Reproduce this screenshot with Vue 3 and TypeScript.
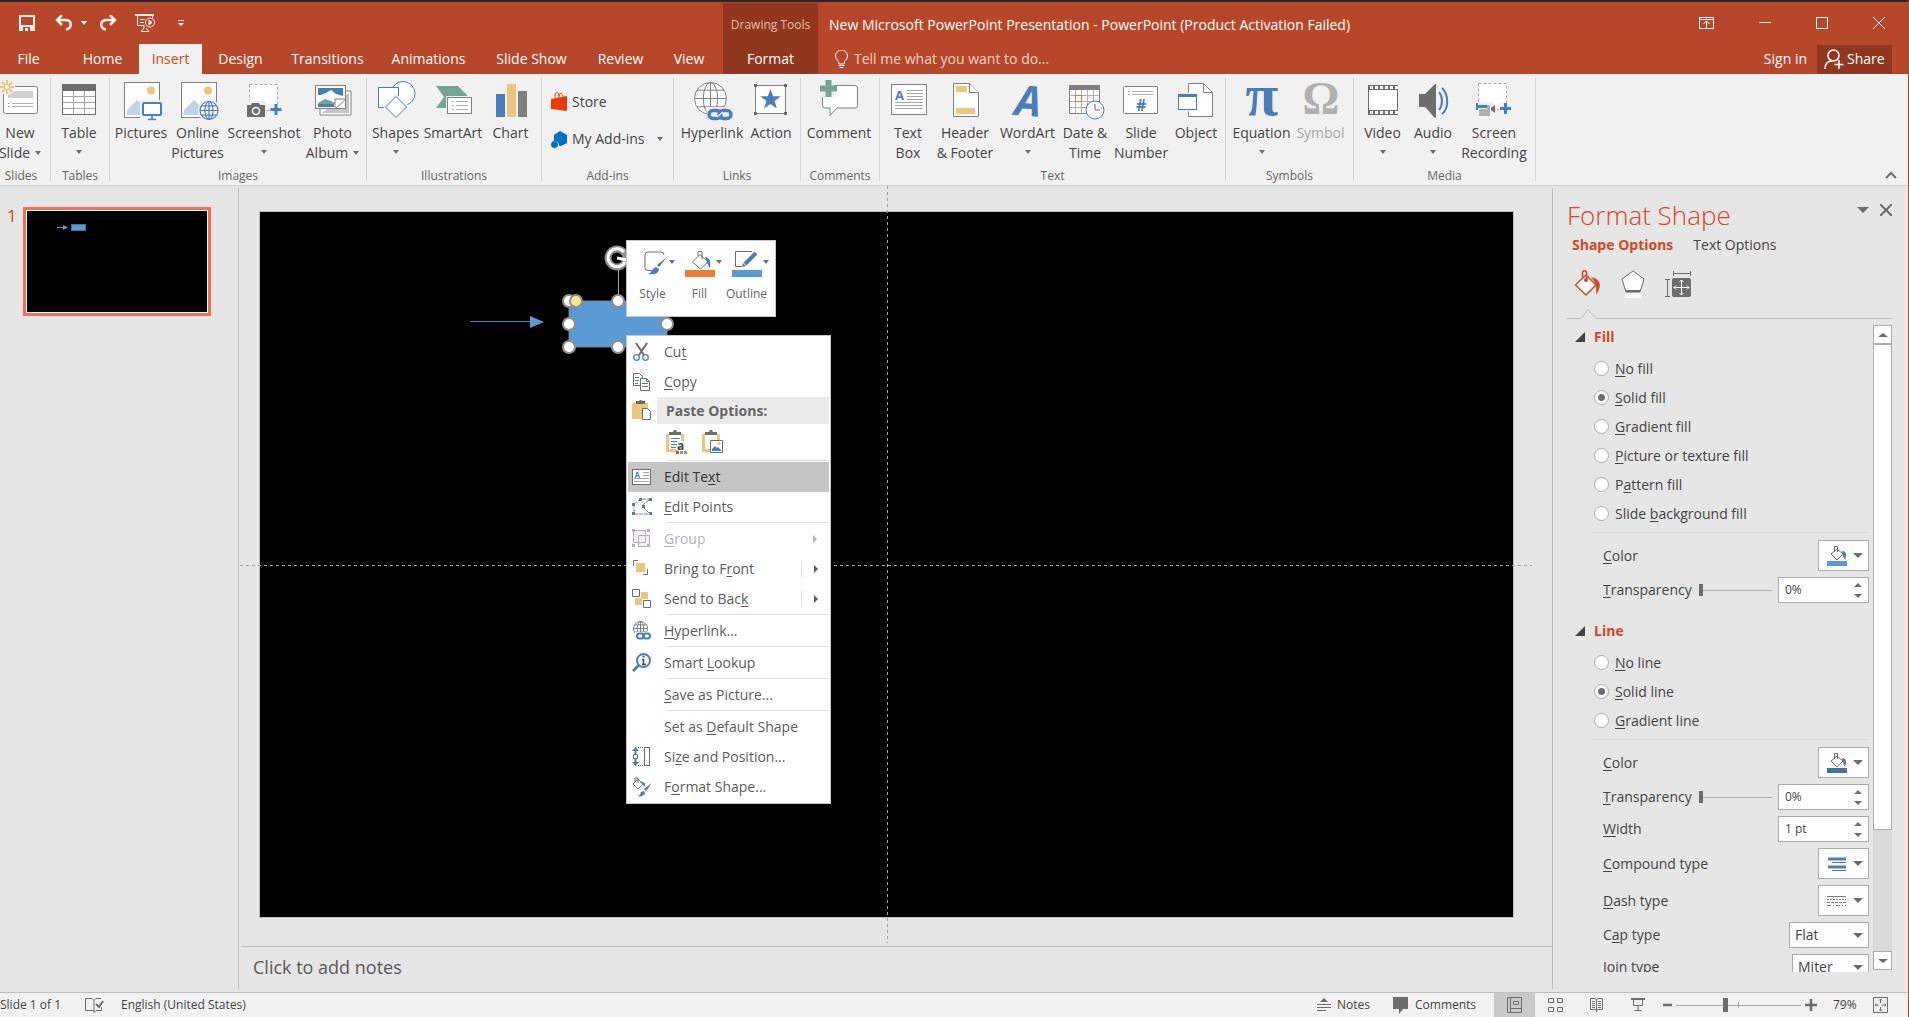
<script setup lang="ts">
import { ref } from 'vue'

interface Tool {
  icon: string
  lines: string[]
  width: number
  caret?: 'below' | 'inline'
  disabled?: boolean
}
interface Group {
  name: string
  width: number
  tools: Tool[]
}
interface MenuItem {
  label: string
  icon?: string
  sub?: boolean
  split?: boolean
  disabled?: boolean
  active?: boolean
  line?: boolean
}

const tabs = [
  { name: 'Home', width: 73 },
  { name: 'Insert', width: 63 },
  { name: 'Design', width: 77 },
  { name: 'Transitions', width: 97 },
  { name: 'Animations', width: 105 },
  { name: 'Slide Show', width: 101 },
  { name: 'Review', width: 77 },
  { name: 'View', width: 60 },
]
const activeTab = ref('Insert')

const groupsBefore: Group[] = [
  { name: 'Slides', width: 51, tools: [{ icon: 'newSlide', lines: ['New', 'Slide'], width: 44, caret: 'inline' }] },
  { name: 'Tables', width: 59, tools: [{ icon: 'table', lines: ['Table'], width: 54, caret: 'below' }] },
  {
    name: 'Images',
    width: 257,
    tools: [
      { icon: 'pictures', lines: ['Pictures'], width: 58 },
      { icon: 'online', lines: ['Online', 'Pictures'], width: 55 },
      { icon: 'screenshot', lines: ['Screenshot'], width: 78, caret: 'below' },
      { icon: 'album', lines: ['Photo', 'Album'], width: 59, caret: 'inline' },
    ],
  },
  {
    name: 'Illustrations',
    width: 175,
    tools: [
      { icon: 'shapes', lines: ['Shapes'], width: 53, caret: 'below' },
      { icon: 'smartArt', lines: ['SmartArt'], width: 62 },
      { icon: 'chart', lines: ['Chart'], width: 53 },
    ],
  },
]
const groupsAfter: Group[] = [
  {
    name: 'Links',
    width: 127,
    tools: [
      { icon: 'hyperlink', lines: ['Hyperlink'], width: 70 },
      { icon: 'action', lines: ['Action'], width: 48 },
    ],
  },
  { name: 'Comments', width: 79, tools: [{ icon: 'comment', lines: ['Comment'], width: 72 }] },
  {
    name: 'Text',
    width: 346,
    tools: [
      { icon: 'textBox', lines: ['Text', 'Box'], width: 52 },
      { icon: 'header', lines: ['Header', '& Footer'], width: 62 },
      { icon: 'wordArt', lines: ['WordArt'], width: 63, caret: 'below' },
      { icon: 'date', lines: ['Date &', 'Time'], width: 52 },
      { icon: 'slideNumber', lines: ['Slide', 'Number'], width: 60 },
      { icon: 'object', lines: ['Object'], width: 50 },
    ],
  },
  {
    name: 'Symbols',
    width: 128,
    tools: [
      { icon: 'equation', lines: ['Equation'], width: 64, caret: 'below' },
      { icon: 'symbol', lines: ['Symbol'], width: 54, disabled: true },
    ],
  },
  {
    name: 'Media',
    width: 182,
    tools: [
      { icon: 'video', lines: ['Video'], width: 51, caret: 'below' },
      { icon: 'audio', lines: ['Audio'], width: 50, caret: 'below' },
      { icon: 'recording', lines: ['Screen', 'Recording'], width: 72 },
    ],
  },
]

const globe = (cx: number, cy: number, r: number, color: string, w: number): string =>
  `<g fill="none" stroke="${color}" stroke-width="${w}"><circle cx="${cx}" cy="${cy}" r="${r}" fill="#fff"/>` +
  `<ellipse cx="${cx}" cy="${cy}" rx="${r * 0.45}" ry="${r}"/><path d="M${cx - r} ${cy}h${2 * r}M${cx} ${cy - r}v${2 * r}` +
  `M${cx - r * 0.85} ${cy - r * 0.52}h${r * 1.7}M${cx - r * 0.85} ${cy + r * 0.52}h${r * 1.7}"/></g>`

const ribbonIcons: Record<string, string> = {
  newSlide:
    '<rect x="5.5" y="6.5" width="34" height="27" rx="2" fill="#fff" stroke="#808080"/><path d="M10 11h25v7H10z" fill="#d0d0d0"/>' +
    '<path d="M10 23.500h2M14 23.500h21M10 26.500h2M14 26.500h21" stroke="#b0b0b0"/><circle cx="9" cy="7" r="8" fill="#f1f1f1"/>' +
    '<path d="M9 0v5M9 9v5M2 7h5M11 7h5M4 2l4 4M10 8l4 4M14 2l-4 4M8 8l-4 4" stroke="#edc57c" stroke-width="2"/><circle cx="9" cy="7" r="2.500" fill="#fff" stroke="#edc57c"/>',
  table:
    '<rect x="5.5" y="4.500" width="33" height="30" fill="#fff" stroke="#6d6d6d"/><path d="M5 4h34v7H5z" fill="#6d6d6d"/>' +
    '<path d="M16.500 11v23M27.500 11v23M6 16.500h32M6 22.500h32M6 28.500h32" stroke="#a6a6a6"/>',
  pictures:
    '<rect x="5.5" y="2.500" width="35" height="35" fill="#fff" stroke="#808080"/><circle cx="32" cy="10.500" r="4" fill="#edc57c"/>' +
    '<path d="M8 35V30l10-10 4 3v12z" fill="#c0d3ea"/><path d="M21 20h23v20H21z" fill="#f1f1f1"/><rect x="24" y="23" width="18" height="12" rx="1" fill="#fff" stroke="#4a7ebb" stroke-width="2"/><path d="M33 36v3M29 39.500h8" stroke="#4a7ebb" stroke-width="1.500"/>',
  online:
    '<rect x="5.5" y="2.500" width="35" height="35" fill="#fff" stroke="#808080"/><circle cx="32" cy="10.500" r="4" fill="#edc57c"/>' +
    '<path d="M8 35V30l10-10 8 8v7z" fill="#c0d3ea"/><circle cx="33" cy="30.500" r="11" fill="#f1f1f1"/>' + globe(33, 30.5, 9, '#4a7ebb', 1.2),
  screenshot:
    '<rect x="7.500" y="4.500" width="28" height="26" fill="#fff" stroke="#a6a6a6" stroke-dasharray="3 2"/><path d="M4 21h20v10H4zM26 24h14v9H26z" fill="#f1f1f1"/>' +
    '<path d="M5 25h4l1-2h7l1 2h5v12H5z" fill="#6d6d6d"/><circle cx="14" cy="31" r="3.500" fill="none" stroke="#fff" stroke-width="1.500"/><path d="M25 30.500h3" stroke="#a6a6a6"/><path d="M34 24v11M28.500 29.500h11" stroke="#4a7ebb" stroke-width="3"/>',
  album:
    '<path d="M9 11h31v24H9z" fill="#fff" stroke="#808080"/><path d="M11 33h27V13z" fill="#c4c4c4"/><rect x="4.500" y="5.500" width="30" height="23" fill="#fff" stroke="#808080"/>' +
    '<path d="M7 8h25v8l-7-2-5-4-5 3-5 2H7z" fill="#4a7ebb"/><path d="M7 23l7-4 6 2 4 2v1H7z" fill="#74a590"/><path d="M7 24h16v3H7z" fill="#4a7ebb"/><path d="M24 29V19h11z" fill="#fff" stroke="#808080"/>',
  shapes:
    '<circle cx="29" cy="13.500" r="12" fill="#fff" stroke="#4a7ebb"/><rect x="4.500" y="7.500" width="20" height="20" fill="#fff" stroke="#4a7ebb"/><path d="M22 15.500l11 11-11 11-11-11z" fill="#fff" stroke="#f1f1f1" stroke-width="3"/><path d="M22 16.500l10.500 10.500L22 37.500 11.500 27z" fill="#fff" stroke="#4a7ebb"/>',
  smartArt:
    '<path d="M5 6h22l9 9v13H5l8-11z" fill="#74a590"/><rect x="15" y="16" width="28" height="20" fill="#f1f1f1"/><rect x="16.500" y="17.500" width="24" height="16" fill="#fff" stroke="#808080"/><path d="M21 21.500h2M25 21.500h12M21 25.500h2M25 25.500h12M21 29.500h2M25 29.500h12" stroke="#b0b0b0"/>',
  chart: '<path d="M7 14h9v23H7z" fill="#4a7ebb"/><path d="M18 4h9v33h-9z" fill="#edc57c"/><path d="M29 11h9v26h-9z" fill="#808080"/>',
  hyperlink:
    globe(20.5, 18.5, 16, '#808080', 1) +
    '<path d="M16 27h28v14H18z" fill="#f1f1f1"/><g fill="none" stroke="#4a7ebb" stroke-width="3.500"><rect x="19" y="30.500" width="12" height="8" rx="4"/><rect x="29" y="30.500" width="12" height="8" rx="4"/></g><path d="M27 37l6-5" stroke="#f1f1f1" stroke-width="1.500"/>',
  action:
    '<rect x="6.500" y="5.500" width="30" height="28" fill="#fff" stroke="#808080"/><path d="M5 4h3v3H5zM35 4h3v3h-3zM5 32h3v3H5zM35 32h3v3h-3z" fill="#6d6d6d"/><path d="M21.500 9l2.600 7.300h7.700l-6.200 4.700 2.300 7.500-6.400-4.600-6.400 4.600 2.300-7.500-6.200-4.700h7.700z" fill="#4a7ebb"/>',
  comment:
    '<path d="M8 5.500h30a2.500 2.500 0 0 1 2.500 2.500v17.500a2.500 2.500 0 0 1-2.500 2.500H20l-7 7.500V28H8a2.500 2.500 0 0 1-2.500-2.500V8A2.500 2.500 0 0 1 8 5.500z" fill="#fff" stroke="#808080"/><path d="M5 4h12v13H5z" fill="#f1f1f1"/><path d="M11.500 0v17M3 8.500h17" stroke="#74a590" stroke-width="6"/>',
  textBox:
    '<rect x="5.5" y="4.500" width="35" height="30" fill="#fff" stroke="#808080"/><text x="9" y="20" font-size="13" font-weight="700" fill="#4a7ebb">A</text><path d="M21 10.500h16M21 13.500h16M21 16.500h16M21 19.500h16M9 22.500h28M9 25.500h28M9 28.500h28" stroke="#a6a6a6"/>',
  header:
    '<path d="M10.500 3.500h16l9 9v24h-25z" fill="#fff" stroke="#808080"/><path d="M26.500 3.500v9h9" fill="#fff" stroke="#808080"/><path d="M13 6h11v6H13zM13 28h19v6H13z" fill="#edc57c"/>',
  wordArt: '<text x="9" y="36" font-size="42" font-weight="700" font-style="italic" fill="#4a7ebb" transform="rotate(4 22 22)">A</text>',
  date:
    '<rect x="6.500" y="5.500" width="30" height="28" fill="#fff" stroke="#808080"/><path d="M6 5h31v5H6z" fill="#808080"/><path d="M12.500 10v23M18.500 10v23M24.500 10v23M30.500 10v23M7 15.500h29M7 21.500h29M7 27.500h29" stroke="#b0b0b0"/><rect x="12.500" y="15.500" width="6" height="6" fill="#fff" stroke="#e0793a"/><circle cx="32" cy="30" r="9" fill="#fff" stroke="#4a7ebb"/><path d="M32 24v6h5" fill="none" stroke="#6d6d6d"/>',
  slideNumber:
    '<rect x="4.500" y="6.500" width="34" height="27" rx="1" fill="#fff" stroke="#808080"/><path d="M9 11.500h2M13 11.500h21M9 14.500h2M13 14.500h21" stroke="#b0b0b0"/><text x="17" y="31" font-size="16" font-weight="700" fill="#4a7ebb">#</text>',
  object:
    '<path d="M14.500 3.500h15l9 9v24h-24z" fill="#fff" stroke="#808080"/><path d="M29.500 3.500v9h9" fill="none" stroke="#808080"/><rect x="2.500" y="12.500" width="22" height="19" fill="#f1f1f1" stroke="none"/><rect x="4.500" y="14.500" width="18" height="15" fill="#fff" stroke="#4a7ebb"/><path d="M4 14h19v3H4z" fill="#4a7ebb"/>',
  equation: '<text x="22" y="35" text-anchor="middle" font-family="Liberation Serif, serif" font-size="60" font-weight="700" fill="#4a7ebb">π</text>',
  symbol: '<text x="22" y="34" text-anchor="middle" font-family="Liberation Serif, serif" font-size="46" font-weight="700" fill="#b0b0b0">Ω</text>',
  video:
    '<rect x="7.500" y="5.500" width="29" height="29" fill="#fff" stroke="#6d6d6d"/><path d="M7 5h30v5H7zM7 30h30v5H7z" fill="#6d6d6d"/><path d="M9 7.500h28M9 32.500h28" stroke="#fff" stroke-width="3" stroke-dasharray="3 2"/>',
  audio:
    '<path d="M8 14h6L24 4h1v34h-1L14 27H8z" fill="#6d6d6d"/><path d="M28 12c4 5 4 13 0 18M31 8c7 7 7 20 0 26" fill="none" stroke="#4a7ebb" stroke-width="2"/>',
  recording:
    '<rect x="6.500" y="3.500" width="28" height="26" fill="#fff" stroke="#a6a6a6" stroke-dasharray="3 2"/><path d="M3 22h20v14H3zM27 23h12v9H27z" fill="#f1f1f1"/><path d="M4 25h14v3H4zM4 23h2v7H4z" fill="#4a7ebb"/><path d="M7 29h11v7H7zM15 25h3v6h-3z" fill="#b0b0b0"/><path d="M19 28l4-3v8l-4-3z" fill="#6d6d6d"/><path d="M33.500 23v11M28 28.500h11" stroke="#4a7ebb" stroke-width="3"/>',
}

const menuIcons: Record<string, string> = {
  cut: '<path d="M4 1l8 12M15 1L7 13" stroke="#6d6d6d" stroke-width="2"/><g fill="#fff" stroke="#4a7ebb" stroke-width="1.300"><circle cx="4.500" cy="15.500" r="2.800"/><circle cx="13.500" cy="15.500" r="2.800"/></g>',
  copy: '<path d="M1.500 1.500h6l3 3v9h-9z" fill="#fff" stroke="#6d6d6d"/><path d="M3 5.500h4M3 8.500h4M3 11.500h3" stroke="#4a7ebb"/><path d="M8.500 6.500h6l3 3v9h-9z" fill="#fff" stroke="#6d6d6d"/><path d="M14.500 6.500v3h3" fill="none" stroke="#6d6d6d"/><path d="M10 11.500h6M10 14.500h6" stroke="#4a7ebb"/>',
  editText: '<rect x=".5" y="2.500" width="18" height="15" fill="#fff" stroke="#6d6d6d"/><text x="2.500" y="11" font-size="8" font-weight="700" fill="#4a7ebb">A</text><path d="M11 5.500h6M11 8.500h6M2 11.500h15M2 14.500h15" stroke="#a6a6a6"/>',
  points: '<path d="M2 7l6-5h9M2 7v10h16M17 3l-7 6 7 7" fill="none" stroke="#808080" stroke-dasharray="4 1"/><path d="M7 1h3v3H7zM17 1h3v3h-3zM0 6h3v3H0zM10 8h3v3h-3zM0 15h3v3H0zM17 15h3v3h-3z" fill="#4a7ebb"/>',
  group: '<rect x="1.500" y="1.500" width="12" height="12" fill="#f5f0f7" stroke="#b5b0b8"/><rect x="6.500" y="6.500" width="11" height="11" fill="#f5f0f7" stroke="#b5b0b8"/><path d="M6.500 13.500h7v-7" fill="none" stroke="#b5b0b8"/><path d="M0 0h3v3H0zM15 0h3v3h-3zM0 15h3v3H0zM15 15h3v3h-3z" fill="#b5b0b8"/>',
  front: '<path d="M6 1.500H1.500V7M11 15.500h4.500V10" fill="none" stroke="#6d6d6d"/><path d="M4 4h9v9H4z" fill="#edc57c"/>',
  back: '<path d="M9 3h7v7H9zM3 9h7v7H3z" fill="#edc57c"/><path d="M.5.5h7v7h-7zM11.500 11.500h7v7h-7z" fill="#fff" stroke="#6d6d6d"/>',
  link: globe(8.5, 7.5, 7, '#808080', 1) + '<path d="M3 11h16v8H3z" fill="#fff"/><g fill="none" stroke="#4a7ebb" stroke-width="2"><rect x="5" y="12.500" width="7" height="5" rx="2.500"/><rect x="11" y="12.500" width="7" height="5" rx="2.500"/></g>',
  lookup: '<path d="M1 18l6-6" stroke="#4a7ebb" stroke-width="3"/><circle cx="11.500" cy="7.500" r="6.500" fill="#fff" stroke="#4a7ebb" stroke-width="2"/><path d="M10.500 3.500h2M10 6.500h1.500v5M10 11.500h4" stroke="#444" stroke-width="1.500" fill="none"/>',
  size: '<path d="M3.500 2v5M3.500 12v5" stroke="#4a7ebb" stroke-width="2"/><path d="M0 4l3.500-4L7 4zM0 15l3.500 4L7 15z" fill="#4a7ebb"/><path d="M1.500 7.500h4v4h-4z" fill="#fff" stroke="#6d6d6d"/><path d="M6 .5h6M6 18.500h6" stroke="#6d6d6d" stroke-dasharray="1 1"/><rect x="12.500" y=".5" width="5" height="18" fill="#fff" stroke="#6d6d6d"/>',
  format: '<path d="M1 7l5-5 5 5-5 5z" fill="#fff" stroke="#6d6d6d"/><path d="M3 5V1h3v5" fill="none" stroke="#6d6d6d"/><path d="M8 5c4-1 6 2 5 5l-2-2z" fill="#4a7ebb"/><path d="M20 6l-6 8-2-2z" fill="#6d6d6d"/><path d="M5 19c2 0 3-1 4-4l3-1 1 2c-1 3-4 4-8 3z" fill="#4a7ebb"/>',
}

const menuTop: MenuItem[] = [
  { label: 'Cu&t', icon: 'cut' },
  { label: '&Copy', icon: 'copy' },
]
const menuRest: MenuItem[] = [
  { label: 'Edit Te&xt', icon: 'editText', active: true },
  { label: '&Edit Points', icon: 'points' },
  { label: '&Group', icon: 'group', sub: true, disabled: true, line: true },
  { label: 'Bring to F&ront', icon: 'front', sub: true, split: true },
  { label: 'Send to Bac&k', icon: 'back', sub: true, split: true },
  { label: '&Hyperlink...', icon: 'link', line: true },
  { label: 'Smart &Lookup', icon: 'lookup', line: true },
  { label: '&Save as Picture...', line: true },
  { label: 'Set as &Default Shape', line: true },
  { label: 'Si&ze and Position...', icon: 'size' },
  { label: 'F&ormat Shape...', icon: 'format' },
]

const fillOptions = ['&No fill', '&Solid fill', '&Gradient fill', '&Picture or texture fill', 'P&attern fill', 'Slide &background fill']
const lineOptions = ['&No line', '&Solid line', '&Gradient line']
const fill = ref('&Solid fill')
const line = ref('&Solid line')
const zoomLevel = ref(79)

/** Splits "Cu&t" into text before, the access key, and text after. */
function keyed(label: string): [string, string, string] {
  const i = label.indexOf('&')
  return [label.slice(0, i), label.charAt(i + 1), label.slice(i + 2)]
}

const handles = [
  [309, 89], [358, 89], [309, 112], [407, 112], [309, 135], [358, 135],
]
</script>

<template>
  <div class="app">
    <header class="titlebar">
      <div class="left">
        <div class="qat">
          <button class="q-save" aria-label="Save"><svg width="16" height="16" viewBox="0 0 16 16"><path d="M0 0h16v16H0z" fill="#f8eeea"/><path d="M2 2h12v8H2zM4 12h7v4H9v-3H6v3H4z" fill="#b7472a"/></svg></button>
          <button class="q-undo" aria-label="Undo"><svg width="18" height="16" viewBox="0 0 18 16"><path d="M2 5h8c8 0 7 9 1 9.500M7 0L2 5l5 5" fill="none" stroke="#f8eeea" stroke-width="2.500"/></svg></button>
          <button class="q-caret" aria-label="Undo history"><i class="caret light"></i></button>
          <button class="q-redo" aria-label="Redo"><svg width="18" height="16" viewBox="0 0 18 16"><path d="M16 5H8c-8 0-7 9-1 9.500M11 0l5 5-5 5" fill="none" stroke="#f8eeea" stroke-width="2.500"/></svg></button>
          <button class="q-show" aria-label="Start From Beginning"><svg width="20" height="18" viewBox="0 0 20 18" fill="none" stroke="#f8eeea"><path d="M0 1h19" stroke-width="2"/><path d="M2.500 2v9.500h7M17.500 2v2M5 5.500h5M5 8.500h4M9 12v2l-3 3.500h8L11 14"/><circle cx="15" cy="8.500" r="4.500"/><path d="M14 6l3 2.500-3 2.500z" fill="#f8eeea"/></svg></button>
          <button class="q-more" aria-label="Customize Quick Access Toolbar"><svg width="6" height="7" viewBox="0 0 6 7"><path d="M0 .5h6" stroke="#fff"/><path d="M0 3h6L3 6z" fill="#fff"/></svg></button>
        </div>
        <nav class="tabs">
          <button class="tab file">File</button>
          <button
            v-for="t in tabs"
            :key="t.name"
            class="tab"
            :class="{ on: activeTab === t.name }"
            :style="{ width: t.width + 'px' }"
            @click="activeTab = t.name"
          >{{ t.name }}</button>
        </nav>
      </div>
      <div class="context">
        <span class="context-name">Drawing Tools</span>
        <button class="tab context-tab">Format</button>
      </div>
      <div class="right">
        <div class="caption">
          <h1>New Microsoft PowerPoint Presentation - PowerPoint (Product Activation Failed)</h1>
          <div class="window">
            <button aria-label="Ribbon Display Options"><svg width="15" height="12" viewBox="0 0 15 12" fill="none" stroke="#fff"><path d="M.5.5h14v11H.5zM0 2.500h15M7.500 11V4M4.500 7l3-3 3 3"/></svg></button>
            <button aria-label="Minimize"><svg width="12" height="12" viewBox="0 0 12 12" stroke="#fff"><path d="M0 5.500h12"/></svg></button>
            <button aria-label="Maximize"><svg width="12" height="12" viewBox="0 0 12 12" fill="none" stroke="#fff"><path d="M.5.5h11v11H.5z"/></svg></button>
            <button aria-label="Close"><svg width="12" height="12" viewBox="0 0 12 12" stroke="#fff"><path d="M0 0l12 12M12 0L0 12"/></svg></button>
          </div>
        </div>
        <div class="account">
          <button class="tell"><svg width="13" height="19" viewBox="0 0 13 19" fill="none" stroke="#fff"><path d="M4 14c0-4-3.500-4-3.500-8a6 6 0 0 1 12 0c0 4-3.500 4-3.500 8z"/><path d="M3.500 15.500h6M4.500 17.500h4"/></svg>Tell me what you want to do...</button>
          <a class="signin" href="#">Sign in</a>
          <button class="share"><svg width="20" height="21" viewBox="0 0 20 21" fill="none" stroke="#fff" stroke-width="1.500"><circle cx="9.500" cy="6.500" r="5.500"/><path d="M1 20c0-6 3-8 7-8M10.500 15.500h9M15 11v9"/></svg>Share</button>
        </div>
      </div>
    </header>

    <section class="ribbon" aria-label="Insert">
      <div v-for="(g, gi) in groupsBefore" :key="g.name" class="group" :class="{ first: gi === 0 }" :style="{ width: g.width + 'px' }">
        <div class="tools">
          <button v-for="t in g.tools" :key="t.icon" class="tool" :style="{ width: t.width + 'px' }">
            <svg class="tool-icon" width="44" height="42" viewBox="0 0 44 42" v-html="ribbonIcons[t.icon]"></svg>
            <span v-for="(l, i) in t.lines" :key="l" class="tool-line">{{ l }}<i v-if="t.caret === 'inline' && i === t.lines.length - 1" class="caret inline"></i></span>
            <span v-if="t.caret === 'below'" class="tool-caret"><i class="caret"></i></span>
          </button>
        </div>
        <div class="group-name">{{ g.name }}</div>
      </div>
      <div class="group addins">
        <div class="addin-list">
          <button class="addin"><svg width="17" height="20" viewBox="0 0 17 20"><path d="M4 6V3c0-3 4-3 4 0v3M8 4c0-4 4-3 4 1" fill="none" stroke="#eb3c00"/><path d="M0 7l16-3v15L0 17z" fill="#eb3c00"/></svg>Store</button>
          <button class="addin"><svg width="17" height="17" viewBox="0 0 17 17"><path d="M9 0l7 4v8l-6 3H8c0-4-2-5-5-5V4z" fill="#0072c6"/><circle cx="3.500" cy="13.500" r="3.500" fill="#0072c6"/></svg>My Add-ins<i class="caret"></i></button>
        </div>
        <div class="group-name">Add-ins</div>
      </div>
      <div v-for="g in groupsAfter" :key="g.name" class="group" :style="{ width: g.width + 'px' }">
        <div class="tools">
          <button v-for="t in g.tools" :key="t.icon" class="tool" :class="{ off: t.disabled }" :style="{ width: t.width + 'px' }" :disabled="t.disabled">
            <svg class="tool-icon" width="44" height="42" viewBox="0 0 44 42" v-html="ribbonIcons[t.icon]"></svg>
            <span v-for="l in t.lines" :key="l" class="tool-line">{{ l }}</span>
            <span v-if="t.caret === 'below'" class="tool-caret"><i class="caret"></i></span>
          </button>
        </div>
        <div class="group-name">{{ g.name }}</div>
      </div>
      <button class="collapse" aria-label="Collapse the Ribbon"><svg width="12" height="8" viewBox="0 0 12 8" fill="none" stroke="#6d6d6d" stroke-width="2"><path d="M1 7l5-5 5 5"/></svg></button>
    </section>

    <main class="body">
      <aside class="thumbs">
        <span class="number">1</span>
        <button class="thumb" aria-label="Slide 1">
          <svg width="180" height="101" viewBox="0 0 180 101"><path d="M0 0h180v101H0z"/><path d="M30 16.500h8" stroke="#5b9bd5"/><path d="M36 14l5 2.500-5 2.500z" fill="#5b9bd5"/><rect x="44.500" y="13.500" width="14" height="6" fill="#5b9bd5" stroke="#41719c"/></svg>
        </button>
      </aside>

      <section class="editor">
        <div class="stage">
          <div class="slide">
            <svg class="drawing" viewBox="0 0 1253 705">
              <path d="M210 109.500h62" stroke="#4a86c5" />
              <path d="M270 104l14 6-14 6z" fill="#5b9bd5" />
              <rect x="309" y="89" width="98" height="46" fill="#5b9bd5" stroke="#808080" />
              <path d="M358.500 58v26" stroke="#a0a0a0" />
              <circle cx="357" cy="46" r="9" fill="none" stroke="#8f8f8f" stroke-width="7" />
              <path d="M364 40a9 9 0 1 0 1 10M357 46l10 2" fill="none" stroke="#fff" stroke-width="3" />
              <circle v-for="h in handles" :key="h.join()" :cx="h[0]" :cy="h[1]" r="6" fill="#fff" stroke="#8f8f8f" stroke-width="2" />
              <circle cx="316" cy="89" r="6" fill="#ffe68a" stroke="#8f8f8f" stroke-width="2" />
            </svg>

            <div class="minibar">
              <button class="mini">
                <span class="mini-top"><svg width="30" height="27" viewBox="-6 0 30 27"><path d="M14 20.500H4a3 3 0 0 1-3-3V5a3 3 0 0 1 3-3h13a3 3 0 0 1 3 3" fill="none" stroke="#6d6d6d"/><path d="M23 7l-8 10-2-2z" fill="#6d6d6d"/><path d="M4 24c4-1 4-6 8-7l3 2c0 5-6 6-11 5z" fill="#4a7ebb"/></svg><i class="caret"></i></span>Style
              </button>
              <button class="mini">
                <span class="mini-top"><svg width="30" height="27" viewBox="0 0 30 27"><path d="M7.500 12L15 4.500l8 7.500-7.500 7z" fill="#fff" stroke="#6d6d6d"/><path d="M13 6V1.500h4V9" fill="none" stroke="#6d6d6d"/><path d="M20 7c5 0 6 5 5 11l-3-5z" fill="#4a7ebb"/><path d="M0 20h30v7H0z" fill="#ed7d31"/></svg><i class="caret"></i></span>Fill
              </button>
              <button class="mini">
                <span class="mini-top"><svg width="30" height="27" viewBox="0 0 30 27"><path d="M20 1.500H3.500v15H10" fill="none" stroke="#6d6d6d"/><path d="M24 3l-11 11" stroke="#4a7ebb" stroke-width="4"/><path d="M10 17l1-4 3 3z" fill="#4a7ebb"/><path d="M0 20h30v7H0z" fill="#5b9bd5"/></svg><i class="caret"></i></span>Outline
              </button>
            </div>

            <div class="menu" role="menu">
              <button v-for="m in menuTop" :key="m.label" class="item" role="menuitem">
                <svg width="20" height="20" viewBox="0 0 20 20" v-html="menuIcons[m.icon ?? '']"></svg>
                <span>{{ keyed(m.label)[0] }}<u>{{ keyed(m.label)[1] }}</u>{{ keyed(m.label)[2] }}</span>
              </button>
              <div class="paste-head">
                <svg width="20" height="20" viewBox="0 0 20 20"><path d="M0 3h16v16H0z" fill="#edc57c"/><path d="M4 1h3l1-1h1l1 1h3v3H4z" fill="#6d6d6d"/><path d="M10.500 8.500h5l3 3v8h-8z" fill="#fff" stroke="#6d6d6d"/></svg>
                <strong>Paste Options:</strong>
              </div>
              <div class="paste-row">
                <button aria-label="Use Destination Theme"><svg width="22" height="24" viewBox="0 0 22 24"><path d="M0 4h18v18H0z" fill="#edc57c"/><path d="M3 5h12v14H3z" fill="#fff"/><path d="M3 2h4l1-2h2l1 2h4v3H3z" fill="#6d6d6d"/><path d="M5 8.500h9M5 11.500h9M5 14.500h6M5 17.500h5" stroke="#4a7ebb"/><path d="M11 11h9v12h-9z" fill="#fff"/><text x="11" y="20" font-size="12" font-weight="700" fill="#444">a</text><path d="M10 21h3v3h-3z" fill="#d24726"/><path d="M14 21h3v3h-3z" fill="#74a590"/><path d="M18 21h3v3h-3z" fill="#ed7d31"/></svg></button>
                <button aria-label="Picture"><svg width="22" height="24" viewBox="0 0 22 24"><path d="M0 4h18v18H0z" fill="#edc57c"/><path d="M3 5h12v14H3z" fill="#fff"/><path d="M3 2h4l1-2h2l1 2h4v3H3z" fill="#6d6d6d"/><path d="M8.500 10.500h12v12h-12z" fill="#fff" stroke="#6d6d6d"/><path d="M10 21v-2l3-3 2 2 1-1 3 3v1z" fill="#4a7ebb"/><circle cx="17" cy="13.500" r="1.500" fill="#edc57c"/></svg></button>
              </div>
              <div class="rule"></div>
              <template v-for="m in menuRest" :key="m.label">
                <div v-if="m.line" class="rule"></div>
                <button class="item" :class="{ active: m.active, off: m.disabled }" role="menuitem" :disabled="m.disabled">
                  <svg width="20" height="20" viewBox="0 0 20 20" v-html="m.icon ? menuIcons[m.icon] : ''"></svg>
                  <span>{{ keyed(m.label)[0] }}<u>{{ keyed(m.label)[1] }}</u>{{ keyed(m.label)[2] }}</span>
                  <i v-if="m.sub" class="sub" :class="{ split: m.split }"></i>
                </button>
              </template>
            </div>
          </div>
          <div class="guide-v"></div>
          <div class="guide-h"></div>
        </div>
        <div class="notes">Click to add notes</div>
      </section>

      <aside class="pane">
        <div class="pane-head">
          <h2>Format Shape</h2>
          <button class="pane-menu" aria-label="Task Pane Options"><svg width="12" height="6" viewBox="0 0 12 6"><path d="M0 0h12L6 6z" fill="#6d6d6d"/></svg></button>
          <button aria-label="Close pane"><svg width="12" height="12" viewBox="0 0 12 12" stroke="#6d6d6d" stroke-width="2"><path d="M0 0l12 12M12 0L0 12"/></svg></button>
        </div>
        <div class="pane-tabs">
          <button class="on">Shape Options</button>
          <button>Text Options</button>
        </div>
        <div class="pane-icons">
          <button aria-label="Fill and Line"><svg width="28" height="28" viewBox="0 0 28 28"><path d="M1.500 15L12 5l10 10-10 10z" fill="#fff" stroke="#d24726" stroke-width="1.500"/><path d="M8.500 8V3c0-3 4-3 4 0v7" fill="none" stroke="#d24726" stroke-width="1.500"/><circle cx="12" cy="10" r="2" fill="#d24726"/><path d="M17 7c9 2 12 8 5 18 1-7 0-13-5-18z" fill="#d24726"/></svg></button>
          <button aria-label="Effects"><svg width="24" height="28" viewBox="0 0 24 28"><path d="M12 1l11 8-4 13H5L1 9z" fill="#fff" stroke="#6d6d6d"/><path d="M5 21h14" stroke="#6d6d6d" stroke-width="2"/><path d="M5 23h14l2 5H3z" fill="#f8f8f8"/></svg></button>
          <button aria-label="Size and Properties"><svg width="28" height="28" viewBox="0 0 28 28"><rect x="8" y="8" width="19" height="19" rx="2" fill="#6d6d6d"/><path d="M9.500 1v5M26.500 1v5M9 3.500h18M1 9.500h5M1 26.500h5M3.500 9v18" stroke="#6d6d6d" fill="none"/><path d="M17.500 10v15M10 17.500h15M15.500 12l2-2 2 2M15.500 23l2 2 2-2M12 15.500l-2 2 2 2M23 15.500l2 2-2 2" stroke="#fff" fill="none"/></svg></button>
        </div>
        <svg class="notch" width="100%" height="12"><path d="M0 11.500h14l7-9 8 9h298" fill="none" stroke="#bfbfbf"/></svg>
        <div class="pane-scroll">
          <div class="pane-content">
            <h3><i class="fold"></i>Fill</h3>
            <label v-for="o in fillOptions" :key="o" class="radio">
              <input v-model="fill" type="radio" name="fill" :value="o" />
              <span>{{ keyed(o)[0] }}<u>{{ keyed(o)[1] }}</u>{{ keyed(o)[2] }}</span>
            </label>
            <div class="fields">
              <div class="row tall"><span><u>C</u>olor</span>
                <button class="picker" aria-label="Fill color"><svg width="20" height="20" viewBox="0 0 20 20"><path d="M4 8l6-5 6 5-6 6z" fill="#fff" stroke="#6d6d6d"/><path d="M7.500 6V.5h3V6" fill="none" stroke="#6d6d6d"/><path d="M15 5c4 0 5 3 3 9l-2-4z" fill="#4a7ebb"/><path d="M0 15h20v5H0z" fill="#5b9bd5"/></svg><i class="caret big"></i></button></div>
              <div class="row"><label for="ft"><u>T</u>ransparency</label><input class="slider" type="range" value="0" aria-label="Fill transparency" />
                <div class="spin"><input id="ft" type="text" value="0%" /><span class="arrows"><i class="up"></i><i class="down"></i></span></div></div>
            </div>
            <h3><i class="fold"></i>Line</h3>
            <label v-for="o in lineOptions" :key="o" class="radio">
              <input v-model="line" type="radio" name="line" :value="o" />
              <span>{{ keyed(o)[0] }}<u>{{ keyed(o)[1] }}</u>{{ keyed(o)[2] }}</span>
            </label>
            <div class="fields">
              <div class="row tall"><span><u>C</u>olor</span>
                <button class="picker" aria-label="Line color"><svg width="20" height="20" viewBox="0 0 20 20"><path d="M4 8l6-5 6 5-6 6z" fill="#fff" stroke="#6d6d6d"/><path d="M7.500 6V.5h3V6" fill="none" stroke="#6d6d6d"/><path d="M15 5c4 0 5 3 3 9l-2-4z" fill="#4a7ebb"/><path d="M0 15h20v5H0z" fill="#41719c"/></svg><i class="caret big"></i></button></div>
              <div class="row"><label for="lt"><u>T</u>ransparency</label><input class="slider" type="range" value="0" aria-label="Line transparency" />
                <div class="spin"><input id="lt" type="text" value="0%" /><span class="arrows"><i class="up"></i><i class="down"></i></span></div></div>
              <div class="row"><label for="lw"><u>W</u>idth</label>
                <div class="spin"><input id="lw" type="text" value="1 pt" /><span class="arrows"><i class="up"></i><i class="down"></i></span></div></div>
              <div class="row tall"><span><u>C</u>ompound type</span>
                <button class="picker" aria-label="Compound type"><svg width="20" height="20" viewBox="0 0 20 20"><path d="M1 5h18M1 13h18" stroke="#4a7ebb" stroke-width="3"/><path d="M5 8.500h14M5 16.500h14" stroke="#6d6d6d"/></svg><i class="caret big"></i></button></div>
              <div class="row tall"><span><u>D</u>ash type</span>
                <button class="picker" aria-label="Dash type"><svg width="20" height="20" viewBox="0 0 20 20" stroke="#808080"><path d="M0 5.500h19"/><path d="M0 8.500h19" stroke-dasharray="2 1"/><path d="M0 11.500h19" stroke-dasharray="3 1"/><path d="M0 14.500h19" stroke-dasharray="4 2 1 2"/></svg><i class="caret big"></i></button></div>
              <div class="row"><label for="cap">C<u>a</u>p type</label>
                <div class="select cap"><select id="cap"><option>Flat</option><option>Round</option><option>Square</option></select><i class="caret big"></i></div></div>
              <div class="row"><label for="join"><u>J</u>oin type</label>
                <div class="select join"><select id="join"><option>Miter</option><option>Round</option><option>Bevel</option></select><i class="caret big"></i></div></div>
            </div>
          </div>
          <div class="scrollbar">
            <button aria-label="Scroll up"><i class="up big"></i></button>
            <div class="track"><div class="grip"></div></div>
            <button aria-label="Scroll down"><i class="down big"></i></button>
          </div>
        </div>
      </aside>
    </main>

    <footer class="status">
      <span class="count">Slide 1 of 1</span>
      <button class="spell" aria-label="Spelling"><svg width="19" height="16" viewBox="0 0 19 16" fill="none" stroke="#6d6d6d"><path d="M9 13.500H.5v-12H7l2 2v12l2-2h5.500V10M9 3.500l2-2h5"/><path d="M11 7l3 3 4-6" stroke-width="2"/></svg></button>
      <span class="lang">English (United States)</span>
      <button class="s-notes"><svg width="14" height="14" viewBox="0 0 14 14" stroke="#6d6d6d"><path d="M3 4l4-4 4 4z" fill="#6d6d6d" stroke="none"/><path d="M0 6.500h14M0 9.500h14M0 12.500h9"/></svg>Notes</button>
      <button class="s-comments"><svg width="16" height="17" viewBox="0 0 16 17"><path d="M0 0h15v12h-5l-4 5v-5H0z" fill="#6d6d6d"/></svg>Comments</button>
      <div class="views">
        <button class="on" aria-label="Normal"><svg width="15" height="16" viewBox="0 0 15 16" fill="none" stroke="#6d6d6d"><path d="M.5.5h14v15H.5zM3.500 0v16M3.500 11.500h11M6.500 4.500h5v3h-5z"/></svg></button>
        <button aria-label="Slide Sorter"><svg width="15" height="14" viewBox="0 0 15 14" fill="none" stroke="#6d6d6d"><path d="M.5.5h5v4h-5zM9.500.5h5v4h-5zM.5 9.500h5v4h-5zM9.500 9.500h5v4h-5z"/></svg></button>
        <button aria-label="Reading View"><svg width="13" height="14" viewBox="0 0 13 14" fill="none" stroke="#6d6d6d"><path d="M.5.5H5l1.500 1L8 .5h4.500v11H8l-1.500 1-1.500-1H.5zM6.500 1v13M2 3.500h3M2 5.500h3M2 7.500h3M2 9.500h3M8 3.500h3M8 5.500h3M8 7.500h3M8 9.500h3"/></svg></button>
        <button aria-label="Slide Show"><svg width="14" height="14" viewBox="0 0 14 14" fill="none" stroke="#6d6d6d"><path d="M0 1h14" stroke-width="2"/><path d="M2.500 2v5.500h9V2M7 8v4M3.500 12.500h7"/></svg></button>
      </div>
      <button class="zoom-btn" aria-label="Zoom out"><svg width="10" height="12" viewBox="0 0 10 12"><path d="M0 6h9" stroke="#6d6d6d" stroke-width="2.500"/></svg></button>
      <div class="zoom"><input v-model="zoomLevel" type="range" min="10" max="188" aria-label="Zoom" /></div>
      <button class="zoom-btn" aria-label="Zoom in"><svg width="12" height="12" viewBox="0 0 12 12"><path d="M0 6h12M6 0v12" stroke="#6d6d6d" stroke-width="2.500"/></svg></button>
      <span class="percent">{{ zoomLevel }}%</span>
      <button class="fit" aria-label="Fit slide to current window"><svg width="15" height="16" viewBox="0 0 15 16" fill="none" stroke="#6d6d6d"><path d="M.5.5h14v15H.5zM7.500 2v4M7.500 14v-4M2 8h4M13 8H9M6 3.500l1.500-1.500L9 3.500M6 12.500L7.500 14 9 12.500M3.500 6.500L2 8l1.500 1.500M11.500 6.500L13 8l-1.500 1.500"/></svg></button>
    </footer>
  </div>
</template>

<style>
body {
  margin: 0;
}
</style>

<style scoped>
.app {
  display: flex;
  flex-direction: column;
  box-sizing: border-box;
  height: 100vh;
  border-top: 2px solid #262626;
  border-right: 1px solid #b7472a;
  background: #e6e6e6;
  color: #444;
  font-family: 'Open Sans', 'Noto Sans', sans-serif;
  font-size: 14px;
  line-height: 20px;
  overflow: hidden;
}
.app *,
.app *::before,
.app *::after {
  box-sizing: border-box;
}
button,
input,
select {
  margin: 0;
  padding: 0;
  border: 0;
  background: none;
  color: inherit;
  font: inherit;
  white-space: nowrap;
}
svg {
  display: block;
  flex: none;
}
h1,
h2,
h3 {
  margin: 0;
  font: inherit;
}
u {
  text-underline-offset: 2px;
}
.caret {
  display: inline-block;
  flex: none;
  border: 3px solid transparent;
  border-top: 4px solid #6d6d6d;
  border-bottom: 0;
}
.caret.light {
  border-top-color: #fff;
}
.caret.inline {
  margin-left: 5px;
  vertical-align: 3px;
}
.caret.big {
  border-width: 5px 5px 0;
}
.up,
.down {
  display: block;
  border: 4px solid transparent;
  border-top: 0;
  border-bottom: 4px solid #6d6d6d;
}
.down {
  border-top: 4px solid #6d6d6d;
  border-bottom: 0;
}
.up.big,
.down.big {
  border-left-width: 5px;
  border-right-width: 5px;
}

/* Title bar and tabs */
.titlebar {
  display: flex;
  flex: none;
  height: 72px;
  background: #b7472a;
  color: #fff;
}
.left {
  width: 723px;
}
.qat {
  display: flex;
  align-items: center;
  height: 42px;
  padding-left: 19px;
}
.q-undo {
  margin-left: 20px;
}
.q-caret {
  display: flex;
  margin-left: 8px;
}
.q-redo {
  margin-left: 12px;
}
.q-show {
  margin-left: 18px;
}
.q-more {
  margin-left: 23px;
}
.tabs {
  display: flex;
  height: 30px;
}
.tab {
  height: 30px;
}
.file {
  width: 57px;
  margin-right: 9px;
}
.tab.on {
  background: #f1f1f1;
  color: #d24726;
}
.context {
  display: flex;
  flex-direction: column;
  width: 95px;
  margin-top: 1px;
  background: #913720;
  text-align: center;
}
.context-name {
  height: 41px;
  color: #f0b8a6;
  font-size: 12px;
  line-height: 44px;
}
.right {
  display: flex;
  flex: 1;
  flex-direction: column;
  padding-left: 11px;
}
.caption {
  display: flex;
  justify-content: space-between;
  height: 42px;
}
.caption h1 {
  line-height: 46px;
}
.window {
  display: flex;
  align-items: center;
  gap: 45px;
  padding-right: 23px;
}
.account {
  display: flex;
  align-items: center;
  height: 30px;
}
.tell {
  display: flex;
  align-items: center;
  gap: 6px;
  margin-right: auto;
  padding-left: 6px;
  color: #f3d3c9;
}
.signin {
  margin-right: 10px;
  color: #fff;
  text-decoration: none;
}
.share {
  display: flex;
  align-items: center;
  gap: 3px;
  width: 75px;
  height: 29px;
  margin-right: 16px;
  padding-left: 7px;
  background: #913720;
}

/* Ribbon */
.ribbon {
  display: flex;
  flex: none;
  height: 112px;
  padding: 4px 0;
  border-bottom: 1px solid #d2d2d2;
  background: #f1f1f1;
}
.group {
  display: flex;
  flex: none;
  flex-direction: column;
  justify-content: space-between;
  border-right: 1px solid #d2d2d2;
  padding-top: 2px;
}
.group.first {
  padding-right: 8px;
}
.tools {
  display: flex;
  justify-content: center;
  padding-right: 2px;
}
.tool {
  display: flex;
  flex: none;
  flex-direction: column;
  align-items: center;
}
.tool-icon {
  margin-bottom: 1px;
  overflow: visible;
}
.tool-line {
  height: 20px;
}
.tool-caret {
  display: flex;
  align-items: center;
  height: 18px;
}
.off {
  color: #a6a6a6;
}
.group-name {
  color: #666;
  font-size: 12px;
  line-height: 10px;
  text-align: center;
}
.addins {
  width: 132px;
}
.addin-list {
  display: flex;
  flex-direction: column;
  gap: 17px;
  padding: 12px 9px 0;
}
.addin {
  display: flex;
  align-items: center;
  gap: 4px;
  height: 20px;
}
.addin .caret {
  margin-left: 8px;
}
.collapse {
  align-self: flex-end;
  margin: 0 11px 2px auto;
}

/* Slide list */
.body {
  display: flex;
  flex: 1;
  min-height: 0;
}
.thumbs {
  display: flex;
  align-items: flex-start;
  width: 239px;
  margin: 2px 0 3px;
  padding-top: 19px;
  border-right: 1px solid #bfbfbf;
}
.number {
  width: 23px;
  padding-left: 7px;
  color: #d24726;
  font-size: 17px;
  line-height: 18px;
}
.thumb {
  padding: 1px;
  border: 3px solid #f07050;
  background: #fff;
}

/* Slide editor */
.editor {
  display: flex;
  flex: 1;
  flex-direction: column;
  min-width: 0;
}
.stage {
  position: relative;
  flex: 1;
  padding: 25px 38px 0 20px;
}
.slide {
  position: relative;
  aspect-ratio: 16 / 9;
  border: 1px solid #bfbfbf;
  background: #000;
}
.drawing {
  width: 100%;
}
.guide-v,
.guide-h {
  position: absolute;
}
.guide-v {
  top: 0;
  bottom: 3px;
  left: 648px;
  width: 1px;
  background: repeating-linear-gradient(to bottom, #a0a0a0 0 3px, transparent 3px 6px);
}
.guide-h {
  top: 379px;
  right: 20px;
  left: 1px;
  height: 1px;
  background: repeating-linear-gradient(to right, #a0a0a0 0 3px, transparent 3px 6px);
}
.notes {
  flex: none;
  height: 46px;
  margin-left: 2px;
  padding-left: 12px;
  border-top: 1px solid #bfbfbf;
  color: #595959;
  font-size: 18px;
  line-height: 40px;
}

/* Floating toolbar */
.minibar {
  position: absolute;
  z-index: 2;
  top: 28px;
  left: 366px;
  display: flex;
  width: 150px;
  height: 77px;
  padding: 9px 0 0 2px;
  border: 1px solid #c6c6c6;
  background: #fff;
}
.mini {
  display: flex;
  flex: none;
  flex-direction: column;
  align-items: center;
  gap: 7px;
  width: 47px;
  color: #666;
  font-size: 12px;
}
.mini-top {
  display: flex;
  align-items: flex-start;
  gap: 1px;
  padding-left: 8px;
}
.mini .caret {
  margin-top: 10px;
}

/* Context menu */
.menu {
  position: absolute;
  z-index: 2;
  top: 123px;
  left: 366px;
  width: 205px;
  padding: 1px;
  border: 1px solid #c6c6c6;
  background: #fff;
  color: #5c5c5c;
}
.item {
  display: flex;
  align-items: center;
  gap: 12px;
  width: 100%;
  height: 30px;
  padding-left: 4px;
  text-align: left;
}
.item.active {
  background: #c5c5c5;
  color: #333;
}
.item.off {
  color: #b5b0b8;
}
.sub {
  display: flex;
  align-items: center;
  justify-content: center;
  width: 28px;
  height: 16px;
  margin-left: auto;
}
.sub.split {
  border-left: 1px solid #dcdcdc;
}
.sub::after {
  border: 4px solid transparent;
  border-right: 0;
  border-left-color: currentColor;
  content: '';
}
.rule {
  height: 2px;
  margin-left: 38px;
  border-top: 1px solid #e1e1e1;
}
.paste-head {
  display: flex;
  gap: 5px;
  height: 27px;
  padding-left: 4px;
}
.paste-head svg {
  margin-top: 3px;
}
.paste-head strong {
  flex: 1;
  padding-left: 9px;
  background: #eaeaea;
  color: #666;
  line-height: 27px;
}
.paste-row {
  display: flex;
  align-items: center;
  gap: 14px;
  height: 36px;
  padding-left: 38px;
}

/* Format pane */
.pane {
  display: flex;
  flex-direction: column;
  width: 356px;
  margin: 2px 0 3px;
  padding: 0 16px 17px 14px;
  border-left: 1px solid #bfbfbf;
}
.pane-head {
  display: flex;
  align-items: flex-start;
  padding-top: 11px;
}
.pane-head h2 {
  flex: 1;
  color: #d24726;
  font-size: 26px;
  font-weight: 300;
  line-height: 32px;
}
.pane-head button {
  height: 22px;
}
.pane-menu {
  margin-right: 11px;
}
.pane-tabs {
  display: flex;
  gap: 20px;
  height: 28px;
  padding-left: 5px;
}
.pane-tabs button {
  height: 28px;
}
.pane-tabs .on {
  color: #d24726;
  font-weight: 700;
}
.pane-icons {
  display: flex;
  gap: 19px;
  padding: 11px 0 0 7px;
}
.notch {
  margin-top: 9px;
}
.pane-scroll {
  display: flex;
  flex: 1;
  justify-content: space-between;
  min-height: 0;
}
.pane-content {
  width: 302px;
  overflow: hidden;
}
h3 {
  display: flex;
  align-items: center;
  gap: 9px;
  height: 35px;
  padding-left: 8px;
  color: #d24726;
  font-weight: 700;
}
.fold {
  border: 5px solid #444;
  border-top-color: transparent;
  border-left-color: transparent;
}
.radio {
  display: flex;
  align-items: center;
  gap: 6px;
  height: 29px;
  padding-left: 27px;
}
.radio input {
  width: 15px;
  height: 15px;
  border: 1px solid #ababab;
  border-radius: 50%;
  background: #fff;
  appearance: none;
}
.radio input:checked {
  background: radial-gradient(circle, #6d6d6d 3px, #fff 4px);
}
.fields {
  display: flex;
  flex-direction: column;
  gap: 6px;
  margin: 4px 0 10px 26px;
  padding: 7px 0 0 10px;
  border-top: 1px solid #dcdcdc;
}
.row {
  display: flex;
  flex: none;
  align-items: center;
  justify-content: space-between;
  height: 26px;
}
.row.tall {
  height: 31px;
}
.picker {
  display: flex;
  align-items: center;
  gap: 6px;
  width: 51px;
  height: 31px;
  padding-left: 8px;
  border: 1px solid #ababab;
  background: #fdfdfd;
}
.slider {
  width: 73px;
  height: 12px;
  margin-left: 2px;
  background: linear-gradient(#ababab, #ababab) center / 100% 1px no-repeat;
  appearance: none;
}
.slider::-webkit-slider-thumb {
  width: 4px;
  height: 12px;
  background: #6d6d6d;
  appearance: none;
}
.spin {
  display: flex;
  align-items: center;
  justify-content: space-between;
  width: 91px;
  height: 26px;
  padding: 0 6px;
  border: 1px solid #ababab;
  background: #fff;
}
.spin input {
  width: 60px;
  font-size: 12px;
}
.arrows {
  display: flex;
  flex-direction: column;
  gap: 7px;
}
.select {
  display: flex;
  align-items: center;
  height: 26px;
  padding: 0 5px;
  border: 1px solid #ababab;
  background: #fdfdfd;
}
.select select {
  flex: 1;
  height: 24px;
  appearance: none;
}
.cap {
  width: 80px;
}
.join {
  width: 77px;
}
.scrollbar {
  display: flex;
  flex-direction: column;
  width: 19px;
  margin: 6px 0 2px;
}
.scrollbar button {
  display: flex;
  align-items: center;
  justify-content: center;
  height: 19px;
  border: 1px solid #ababab;
  background: #fdfdfd;
}
.track {
  flex: 1;
  background: #dadada;
}
.grip {
  height: 80%;
  border: 1px solid #ababab;
  background: #fff;
}

/* Status bar */
.status {
  display: flex;
  flex: none;
  align-items: center;
  height: 25px;
  border-top: 1px solid #bfbfbf;
  background: #f1f1f1;
  font-size: 12px;
}
.count {
  width: 85px;
}
.spell {
  margin-right: 17px;
}
.lang {
  margin-right: auto;
}
.s-notes,
.s-comments {
  display: flex;
  align-items: center;
  gap: 6px;
  width: 76px;
}
.s-comments {
  width: 101px;
}
.views {
  display: flex;
  margin-right: 1px;
}
.views button {
  display: flex;
  align-items: center;
  justify-content: center;
  width: 41px;
  height: 24px;
}
.views .on {
  background: #c9c9c9;
}
.zoom-btn {
  margin-left: 4px;
}
.zoom {
  display: flex;
  width: 125px;
  margin-left: 3px;
}
.zoom input {
  width: 125px;
  height: 14px;
  background:
    linear-gradient(#ababab, #ababab) 62px center / 1px 6px no-repeat,
    linear-gradient(#ababab, #ababab) center / 100% 1px no-repeat;
  appearance: none;
}
.zoom input::-webkit-slider-thumb {
  width: 5px;
  height: 14px;
  background: #6d6d6d;
  appearance: none;
}
.percent {
  width: 40px;
  margin-left: 16px;
}
.fit {
  margin-right: 20px;
}
</style>
